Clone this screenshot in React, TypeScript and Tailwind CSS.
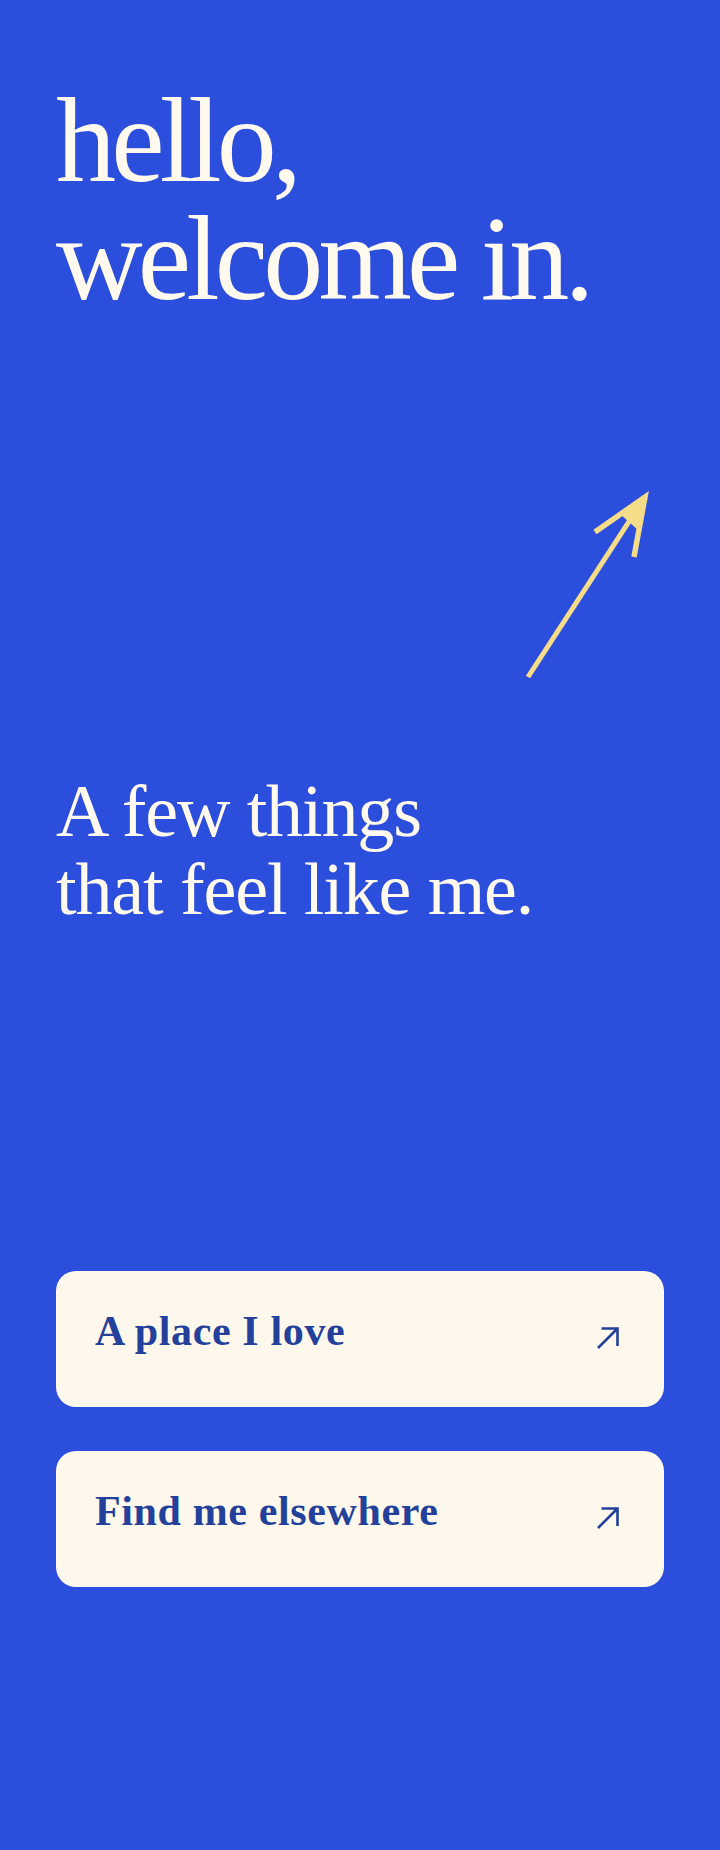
import React from "react";

const serif = { fontFamily: '"Liberation Serif", "Times New Roman", serif' };

const LinkCard = ({ label }: { label: string }) => (
  <a
    href="#"
    className="flex h-[136px] items-center justify-between rounded-[20px] bg-[#fef8ec] pl-[39px] pr-[44px]"
  >
    <span
      className="pb-4 text-[42px] font-bold leading-none tracking-[0.015em] text-[#23409a]"
      style={serif}
    >
      {label}
    </span>
    <svg width="24" height="24" viewBox="0 0 24 24" fill="none" className="mb-[2px]">
      <path
        d="M2 22 L21.5 2.5 M5.5 2.5 H21.5 V20"
        stroke="#23409a"
        strokeWidth="2.6"
        strokeLinecap="butt"
      />
    </svg>
  </a>
);

export default function App() {
  return (
    <div className="min-h-[1850px] bg-[#2b4edc] px-14 pt-[82px] pb-20" style={serif}>
      <h1 className="text-[120px] leading-[118px] font-normal tracking-[-0.04em] text-[#fff9ee]">
        hello,
        <br />
        welcome in.
      </h1>

      <svg
        width="140"
        height="195"
        viewBox="0 0 140 195"
        fill="none"
        className="ml-[464px] mt-[172px]"
      >
        <path d="M8 187 L123 10" stroke="#f5dc88" strokeWidth="5" />
        <path
          d="M75 42 L125 7 L114 67"
          stroke="#f5dc88"
          strokeWidth="5.5"
          strokeLinejoin="miter"
          strokeMiterlimit="10"
        />
        <path d="M125 7 L100 24 L118 40 Z" fill="#f5dc88" />
      </svg>

      <h2 className="mt-[87px] text-[74px] leading-[78px] font-normal tracking-[-0.015em] text-[#fff9ee]">
        A few things
        <br />
        that feel like me.
      </h2>

      <div className="mt-[343px] flex flex-col gap-[44px]">
        <LinkCard label="A place I love" />
        <LinkCard label="Find me elsewhere" />
      </div>
    </div>
  );
}
